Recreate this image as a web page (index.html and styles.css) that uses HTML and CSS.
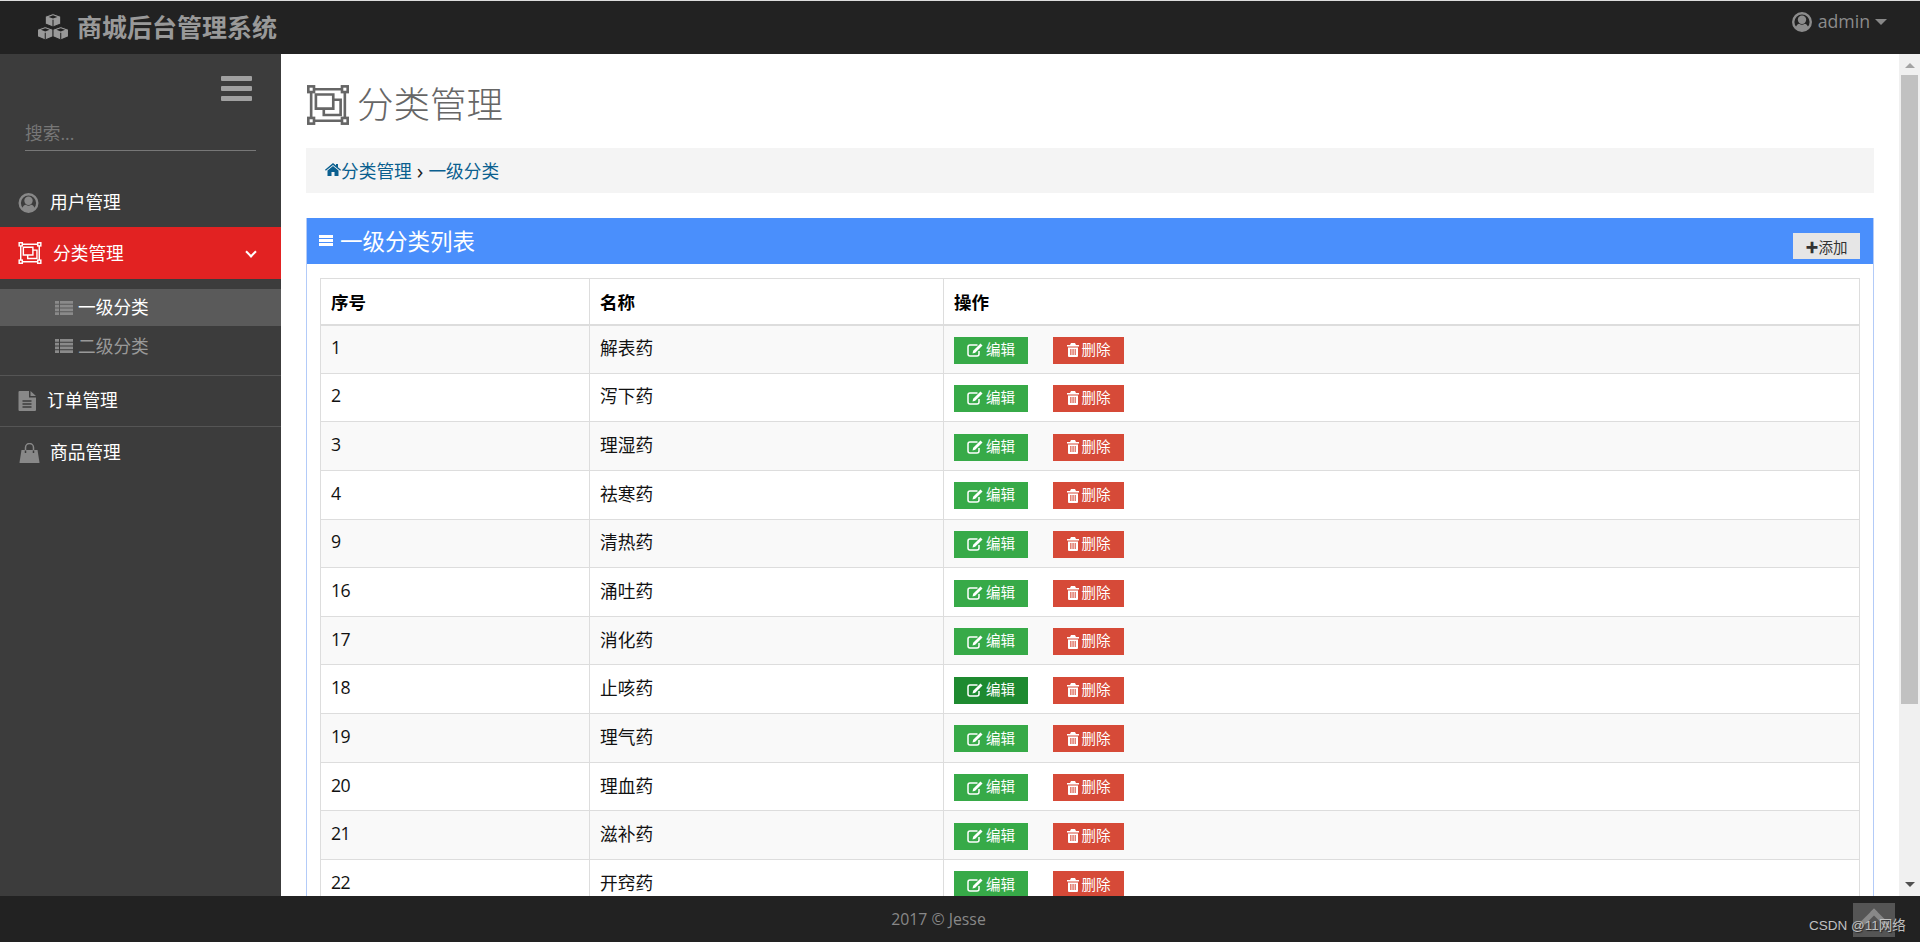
FILE: index.html
```html
<!DOCTYPE html>
<html lang="zh">
<head>
<meta charset="utf-8">
<title>商城后台管理系统</title>
<link rel="stylesheet" href="styles.css">
</head>
<body>
<svg class="sprite" width="0" height="0">
  <symbol id="i-cube" viewBox="0 0 16 14"><path d="M8 .5l7.500 2.700v7.300L8 13.500.5 10.500V3.200z" fill="currentColor" stroke="#222" stroke-width="1"/><path d="M8 2.200l4.200 1.500L8 5.300 3.800 3.700z" fill="#222"/><path d="M8 6.500v6.500" stroke="#222" stroke-width="1"/></symbol>
  <symbol id="i-user" viewBox="0 0 20 20"><circle cx="10" cy="10" r="8.800" fill="none" stroke="currentColor" stroke-width="2.400"/><circle cx="10" cy="7.800" r="4.200" fill="currentColor"/><path d="M3.500 16c.6-2.800 2.600-4.300 3.800-4.300 1.600 1.300 3.800 1.300 5.400 0 1.200 0 3.200 1.500 3.800 4.300-3.600 3.300-9.400 3.300-13 0z" fill="currentColor"/></symbol>
  <symbol id="i-group" viewBox="0 0 40 38"><g fill="none" stroke="currentColor" stroke-width="2.500"><path d="M7 4h26M7 34h26M4 7v24M36 7v24"/><path d="M8.500 9h16.500v13.500H8.500zM25 14h7v14.500H16V22.500"/><rect x="1.300" y="1.300" width="5.400" height="5.400"/><rect x="33.300" y="1.300" width="5.400" height="5.400"/><rect x="1.300" y="31.300" width="5.400" height="5.400"/><rect x="33.300" y="31.300" width="5.400" height="5.400"/></g></symbol>
  <symbol id="i-list" viewBox="0 0 18 14"><path d="M0 0h4v2.700H0zM5 0h13v2.700H5zM0 3.700h4v2.700H0zM5 3.700h13v2.700H5zM0 7.500h4v2.700H0zM5 7.500h13v2.700H5zM0 11.300h4V14H0zM5 11.300h13V14H5z" fill="currentColor"/></symbol>
  <symbol id="i-file" viewBox="0 0 18 20"><path d="M1.500 0H11v6.500h7V19a1 1 0 0 1-1 1H1.500a1 1 0 0 1-1-1V1a1 1 0 0 1 1-1zM12.500 0L18 5h-5.500z" fill="currentColor"/><path d="M4.500 10h9M4.500 13h9M4.500 16h9" stroke="#3c3c3c" stroke-width="1.400"/></symbol>
  <symbol id="i-bag" viewBox="0 0 20 20"><path d="M2 7h16l2 12.500a.5.500 0 0 1-.5.500H.5a.5.500 0 0 1-.5-.5z" fill="currentColor"/><path d="M6 10V4.500a4 4 0 0 1 8 0V10" fill="none" stroke="currentColor" stroke-width="1.500"/><path d="M6 7.500v2.500M14 7.500v2.500" stroke="#3c3c3c" stroke-width="1.500"/></symbol>
  <symbol id="i-home" viewBox="0 0 16 13"><path d="M8 0l3 2.500V1h2v3.200L16 6.800l-.8.900L8 1.900.8 7.700 0 6.800zM2.500 7.500L8 3l5.500 4.500V13H9.500V9h-3v4h-4z" fill="currentColor"/></symbol>
  <symbol id="i-edit" viewBox="0 0 16 14"><path d="M10.500 2H3a2 2 0 0 0-2 2v7a2 2 0 0 0 2 2h7a2 2 0 0 0 2-2V8" fill="none" stroke="currentColor" stroke-width="1.500"/><path d="M13.500.500l2 2L8.200 9.800 5.500 10.500l.7-2.700z" fill="currentColor"/></symbol>
  <symbol id="i-trash" viewBox="0 0 12 14"><path d="M4 0h4l1 2h3v1.500H0V2h3zM1 4.500h10V13a1 1 0 0 1-1 1H2a1 1 0 0 1-1-1zM3.300 6v6h1.100V6zM5.500 6v6h1.100V6zM7.700 6v6h1V6z" fill="currentColor" fill-rule="evenodd"/></symbol>
</svg>

<header class="topbar">
  <div class="brand">
    <svg class="brand-icon" viewBox="0 0 31 27"><use href="#i-cube" x="7.500" y="0" width="16" height="14"/><use href="#i-cube" x="0" y="12.500" width="16" height="14"/><use href="#i-cube" x="15" y="12.500" width="16" height="14"/></svg>
    <span>商城后台管理系统</span>
  </div>
  <div class="account">
    <svg class="account-icon"><use href="#i-user"/></svg>
    <span>admin</span>
    <i class="caret"></i>
  </div>
</header>

<div class="middle">
  <aside class="sidebar">
    <div class="burger"><i></i><i></i><i></i></div>
    <input class="search" type="text" placeholder="搜索...">
    <nav>
      <a class="nav-row nav-user"><svg class="nav-icon"><use href="#i-user"/></svg><span>用户管理</span></a>
      <a class="nav-row nav-active"><svg class="nav-icon-group"><use href="#i-group"/></svg><span>分类管理</span><i class="chevron"></i></a>
      <div class="submenu">
        <a class="sub-row sub-active"><svg class="sub-icon"><use href="#i-list"/></svg><span>一级分类</span></a>
        <a class="sub-row"><svg class="sub-icon"><use href="#i-list"/></svg><span>二级分类</span></a>
      </div>
      <a class="nav-row nav-order"><svg class="nav-icon-file"><use href="#i-file"/></svg><span>订单管理</span></a>
      <a class="nav-row nav-goods"><svg class="nav-icon"><use href="#i-bag"/></svg><span>商品管理</span></a>
    </nav>
  </aside>

  <main class="content">
    <h1 class="page-title"><svg class="title-icon"><use href="#i-group"/></svg><span>分类管理</span></h1>
    <div class="crumbs">
      <svg class="home-icon"><use href="#i-home"/></svg><a>分类管理</a><b>›</b><a>一级分类</a>
    </div>
    <section class="panel">
      <div class="panel-head">
        <div class="panel-title"><i class="mini-bars"></i><span>一级分类列表</span></div>
        <button class="add"><b>✚</b>添加</button>
      </div>
      <div class="panel-body">
        <table>
          <colgroup><col class="c1"><col class="c2"><col></colgroup>
          <thead><tr><th>序号</th><th>名称</th><th>操作</th></tr></thead>
          <tbody>
            <tr><td class="num">1</td><td>解表药</td><td class="ops"><a class="btn edit"><svg><use href="#i-edit"/></svg>编辑</a><a class="btn del"><svg><use href="#i-trash"/></svg>删除</a></td></tr>
            <tr><td class="num">2</td><td>泻下药</td><td class="ops"><a class="btn edit"><svg><use href="#i-edit"/></svg>编辑</a><a class="btn del"><svg><use href="#i-trash"/></svg>删除</a></td></tr>
            <tr><td class="num">3</td><td>理湿药</td><td class="ops"><a class="btn edit"><svg><use href="#i-edit"/></svg>编辑</a><a class="btn del"><svg><use href="#i-trash"/></svg>删除</a></td></tr>
            <tr><td class="num">4</td><td>祛寒药</td><td class="ops"><a class="btn edit"><svg><use href="#i-edit"/></svg>编辑</a><a class="btn del"><svg><use href="#i-trash"/></svg>删除</a></td></tr>
            <tr><td class="num">9</td><td>清热药</td><td class="ops"><a class="btn edit"><svg><use href="#i-edit"/></svg>编辑</a><a class="btn del"><svg><use href="#i-trash"/></svg>删除</a></td></tr>
            <tr><td class="num">16</td><td>涌吐药</td><td class="ops"><a class="btn edit"><svg><use href="#i-edit"/></svg>编辑</a><a class="btn del"><svg><use href="#i-trash"/></svg>删除</a></td></tr>
            <tr><td class="num">17</td><td>消化药</td><td class="ops"><a class="btn edit"><svg><use href="#i-edit"/></svg>编辑</a><a class="btn del"><svg><use href="#i-trash"/></svg>删除</a></td></tr>
            <tr><td class="num">18</td><td>止咳药</td><td class="ops"><a class="btn edit hover"><svg><use href="#i-edit"/></svg>编辑</a><a class="btn del"><svg><use href="#i-trash"/></svg>删除</a></td></tr>
            <tr><td class="num">19</td><td>理气药</td><td class="ops"><a class="btn edit"><svg><use href="#i-edit"/></svg>编辑</a><a class="btn del"><svg><use href="#i-trash"/></svg>删除</a></td></tr>
            <tr><td class="num">20</td><td>理血药</td><td class="ops"><a class="btn edit"><svg><use href="#i-edit"/></svg>编辑</a><a class="btn del"><svg><use href="#i-trash"/></svg>删除</a></td></tr>
            <tr><td class="num">21</td><td>滋补药</td><td class="ops"><a class="btn edit"><svg><use href="#i-edit"/></svg>编辑</a><a class="btn del"><svg><use href="#i-trash"/></svg>删除</a></td></tr>
            <tr><td class="num">22</td><td>开窍药</td><td class="ops"><a class="btn edit"><svg><use href="#i-edit"/></svg>编辑</a><a class="btn del"><svg><use href="#i-trash"/></svg>删除</a></td></tr>
          </tbody>
        </table>
      </div>
    </section>
  </main>

  <div class="scrollbar">
    <i class="arrow-up"></i>
    <div class="thumb"></div>
    <i class="arrow-down"></i>
  </div>
</div>

<footer class="footer">
  <span>2017 © Jesse</span>
  <div class="to-top"><i></i></div>
  <div class="watermark">CSDN @11网络</div>
</footer>
</body>
</html>
```

FILE: styles.css
```css
* { box-sizing: border-box; }
html, body { margin: 0; height: 100%; }
body {
  height: 942px;
  overflow: hidden;
  display: flex;
  flex-direction: column;
  font-family: "Open Sans", "Noto Sans CJK SC", sans-serif;
  font-size: 17.7px;
  color: #111;
  background: #fff;
}
.sprite { position: absolute; }
a { display: block; }

.topbar {
  height: 54px;
  flex: none;
  background: #222;
  border-top: 1px solid #ddd;
  display: flex;
  align-items: center;
  justify-content: space-between;
  color: #999;
}
.brand {
  display: flex;
  align-items: center;
  padding-left: 37px;
  font-size: 25px;
  font-weight: 700;
  line-height: 1;
  color: #999;
}
.brand-icon { width: 32px; height: 28px; margin: -2px 8px 0 0; color: #999; }
.account {
  display: flex;
  align-items: center;
  padding-right: 33px;
  color: #8c8c8c;
  margin-top: -12px;
  line-height: 1;
}
.account-icon { width: 20px; height: 20px; margin-right: 6px; }
.caret {
  width: 0;
  height: 0;
  margin-left: 5px;
  border: 6px solid transparent;
  border-top: 6px solid #888;
  border-bottom: 0;
}

.middle { flex: 1; display: flex; min-height: 0; }

.sidebar {
  width: 281px;
  flex: none;
  background: #3c3c3c;
  color: #fff;
  display: flex;
  flex-direction: column;
  padding-top: 22px;
}
.burger {
  align-self: flex-end;
  margin-right: 29px;
  width: 31px;
  display: flex;
  flex-direction: column;
  gap: 5px;
}
.burger i { height: 5px; background: #a0a0a0; border-radius: 1px; }
.search {
  margin: 19px 25px 0;
  width: 231px;
  height: 31px;
  padding: 0 0 4px;
  background: transparent;
  border: 0;
  border-bottom: 1px solid #777;
  outline: 0;
  font: 17.7px "Open Sans", "Noto Sans CJK SC", sans-serif;
  color: #777;
}
.search::placeholder { color: #777; opacity: 1; }
nav { margin-top: 28px; }
.nav-row {
  display: flex;
  align-items: center;
  color: #fff;
  line-height: 1;
}
.nav-user { height: 48px; padding-left: 18px; }
.nav-active {
  height: 52px;
  padding-left: 18px;
  background: #e22222;
  position: relative;
}
.nav-active span { padding-top: 1px; }
.nav-icon { width: 21px; height: 20px; margin-right: 11px; color: #888; }
.nav-icon-group { width: 24px; height: 22px; margin-right: 11px; color: #fff; }
.nav-icon-file { width: 18px; height: 20px; margin-right: 11px; color: #888; }
.chevron {
  position: absolute;
  right: 26px;
  top: 21px;
  width: 8px;
  height: 8px;
  border-right: 2px solid #fff;
  border-bottom: 2px solid #fff;
  transform: rotate(45deg);
}
.submenu { padding: 10px 0; border-bottom: 1px solid #555; }
.sub-row {
  height: 37px;
  padding-left: 55px;
  display: flex;
  align-items: center;
  color: #999;
}
.sub-row span { margin-top: -2px; }
.sub-row + .sub-row { height: 39px; }
.sub-active { background: #5a5a5a; color: #fff; }
.sub-active span { margin-top: -4px; }
.sub-icon { width: 18px; height: 14px; margin-right: 5px; color: #8a8a8a; }
.nav-order { height: 51px; padding-left: 18px; border-bottom: 1px solid #555; }
.nav-goods { height: 51px; padding-left: 19px; }
.nav-goods .nav-icon { margin-right: 10px; }

.content {
  flex: 1;
  min-width: 0;
  overflow: hidden;
  padding: 0 25px;
}
.page-title {
  margin: 29px 0 0;
  height: 65px;
  display: flex;
  align-items: flex-start;
  font-size: 36.500px;
  font-weight: 300;
  line-height: 42px;
  color: #666;
}
.title-icon { width: 44px; height: 40px; margin: 2px 7px 0 0; color: #666; }
.crumbs {
  height: 45px;
  background: #f4f4f4;
  padding: 0 0 2px 19px;
  display: flex;
  align-items: center;
  color: #0a5f8f;
}
.home-icon { width: 16px; height: 13px; margin-right: 0; }
.crumbs b { color: #222; font-size: 22px; line-height: 20px; font-weight: 400; margin: 0 5px 0 5px; }

.panel {
  margin-top: 25px;
  border-left: 1px solid #b3cbf8;
  border-right: 1px solid #b3cbf8;
}
.panel-head {
  height: 46px;
  background: #4a8ffc;
  display: flex;
  align-items: flex-start;
  justify-content: space-between;
  padding: 0 13px 0 12px;
}
.panel-title {
  height: 44px;
  display: flex;
  align-items: center;
  font-size: 22.500px;
  color: #fff;
}
.mini-bars {
  width: 14px;
  height: 11px;
  margin: 1px 7px 0 0;
  border-top: 3px solid #fff;
  border-bottom: 3px solid #fff;
  position: relative;
}
.mini-bars::after {
  content: "";
  position: absolute;
  left: 0;
  right: 0;
  top: 1px;
  height: 3px;
  background: #fff;
}
.add {
  margin-top: 15px;
  width: 67px;
  height: 26px;
  padding: 0;
  border: 0;
  background: #e6e6e6;
  color: #333;
  font: 14.500px "Open Sans", "Noto Sans CJK SC", sans-serif;
  display: flex;
  align-items: center;
  justify-content: center;
}
.add b { font-size: 13px; color: #333; }
.panel-body { padding: 14px 13px 0 13px; }

table {
  width: 100%;
  table-layout: fixed;
  border-collapse: collapse;
  border: 1px solid #ddd;
}
.c1 { width: 269px; }
.c2 { width: 354px; }
th, td {
  border: 1px solid #ddd;
  padding: 0 10px;
  text-align: left;
  vertical-align: middle;
}
th { height: 46px; font-weight: 700; border-bottom-width: 2px; color: #000; font-size: 17.500px; }
td { height: 48.650px; padding-bottom: 4px; font-size: 17.700px; }
.num { letter-spacing: -.6px; }
td.ops { padding-top: 2px; padding-bottom: 0; line-height: 0; }
tbody tr:nth-child(odd) { background: #f9f9f9; }
.btn {
  height: 27px;
  display: inline-flex;
  align-items: center;
  justify-content: center;
  vertical-align: middle;
  font-size: 14.500px;
  color: #fff;
  line-height: 1;
}
.btn svg { margin-right: 3px; }
.edit { width: 74px; margin-right: 25px; background: #37aa48; }
.edit svg { width: 16px; height: 14px; }
.edit.hover { background: #1e8a30; }
.del { width: 71px; background: #d64a38; }
.del svg { width: 12px; height: 14px; }

.scrollbar {
  width: 21px;
  flex: none;
  background: #f0f0f0;
  display: flex;
  flex-direction: column;
  align-items: center;
}
.arrow-up, .arrow-down {
  width: 0;
  height: 0;
  border-left: 5px solid transparent;
  border-right: 5px solid transparent;
}
.arrow-up { margin-top: 9px; border-bottom: 5px solid #a3a3a3; }
.thumb { margin-top: 7px; width: 17px; height: 629px; background: #c1c1c1; }
.arrow-down { margin-top: auto; margin-bottom: 9px; border-top: 5px solid #505050; }

.footer {
  height: 46px;
  flex: none;
  background: #222;
  color: #888;
  font-size: 15.800px;
  display: flex;
  align-items: center;
  justify-content: center;
  position: relative;
}
.footer > span { margin: -1px 43px 0 0; }
.to-top {
  position: absolute;
  left: 1853px;
  top: 7px;
  width: 42px;
  height: 34px;
  background: #555;
}
.to-top i {
  position: absolute;
  left: 10px;
  top: 10px;
  width: 22px;
  height: 22px;
  border-top: 5px solid #888;
  border-left: 5px solid #888;
  transform: rotate(45deg);
}
.watermark {
  position: absolute;
  left: 1809px;
  top: 21px;
  font-family: "Liberation Sans", "Noto Sans CJK SC", sans-serif;
  font-size: 13.500px;
  line-height: 17px;
  color: #c0c0c0;
  text-shadow: 1px 1px 1px #222;
  white-space: nowrap;
}
```
